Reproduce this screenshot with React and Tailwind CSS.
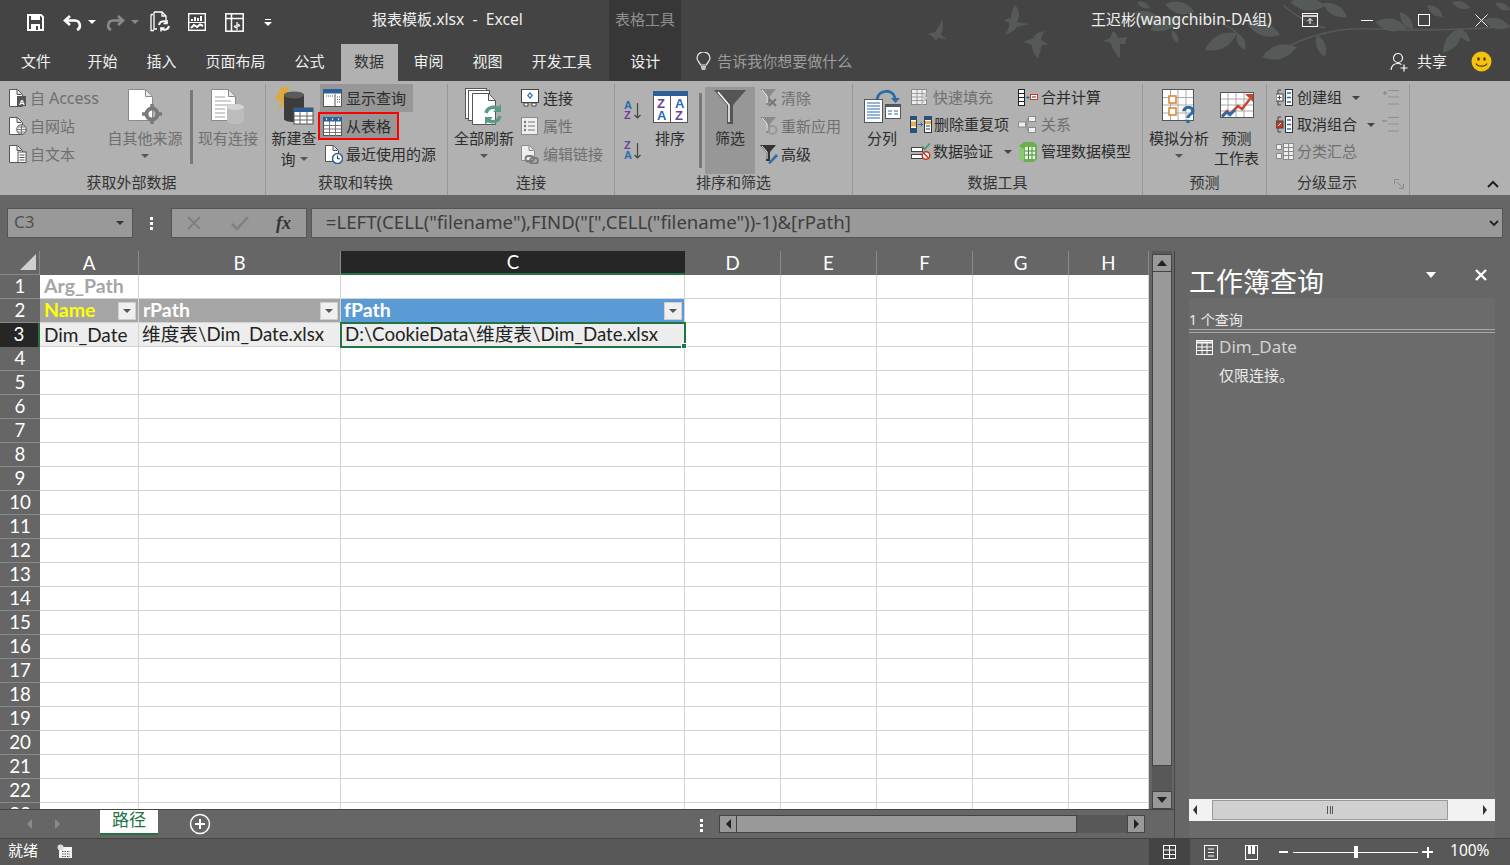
import { Fragment } from "react";

const GREY = "#6f6f6f";

const Caret = ({ color = "#4a4a4a", className = "" }) => (
  <span className={`inline-block w-0 h-0 border-x-[4px] border-x-transparent border-t-[4px] ${className}`} style={{ borderTopColor: color }} />
);

// ---- quick access + window icons
const SaveIcon = () => (
  <svg width="17" height="17" viewBox="0 0 17 17">
    <path d="M1 1h13l2 2v13H1z" fill="none" stroke="#fff" strokeWidth="2" />
    <rect x="4" y="1" width="9" height="5" fill="#fff" />
    <rect x="4" y="10" width="9" height="6" fill="#fff" />
    <rect x="9" y="12" width="2" height="4" fill="#444" />
  </svg>
);
const UndoIcon = ({ color = "#fff" }) => (
  <svg width="19" height="17" viewBox="0 0 19 17" fill="none">
    <path d="M7 2 2 6.500 7 11" stroke={color} strokeWidth="2.600" />
    <path d="M3 6.500h9a5 5 0 0 1 2 9.500" stroke={color} strokeWidth="2.600" />
  </svg>
);
const RedoIcon = ({ color = "#8a8a8a" }) => (
  <svg width="19" height="17" viewBox="0 0 19 17" fill="none">
    <path d="M12 2l5 4.500L12 11" stroke={color} strokeWidth="2.600" />
    <path d="M16 6.500H7a5 5 0 0 0-2 9.500" stroke={color} strokeWidth="2.600" />
  </svg>
);
const RefreshDocIcon = () => (
  <svg width="21" height="22" viewBox="0 0 21 22" fill="none" stroke="#fff" strokeWidth="1.300">
    <path d="M1 3.500h2M1 3.500v16h3" />
    <path d="M4 1h8l4 4v5M4 1v17h3" />
    <path d="M12 1v4h4" />
    <path d="M9 14a4.500 4.500 0 0 1 8-2M19 15a4.500 4.500 0 0 1-8 2" strokeWidth="2" />
    <path d="M17 9v3.500h-3.500M11 20.500V17h3.500" strokeWidth="1.500" />
  </svg>
);
const ChartBoardIcon = () => (
  <svg width="18" height="18" viewBox="0 0 18 18" fill="none">
    <rect x=".7" y=".7" width="16.600" height="16.600" stroke="#fff" strokeWidth="1.400" />
    <path d="M4 8V6M7 8V4M10 8V5M13 8V3" stroke="#fff" strokeWidth="2" />
    <path d="M1 9.500h16" stroke="#fff" />
    <path d="M3 15l3-3 3 2 3-2.500 3 1.500" stroke="#fff" strokeWidth="2" />
  </svg>
);
const PivotIcon = () => (
  <svg width="19" height="19" viewBox="0 0 19 19" fill="none" stroke="#fff">
    <rect x=".8" y=".8" width="17.400" height="17.400" strokeWidth="1.500" />
    <path d="M1 5.500h17M6.500 1v17" strokeWidth="1.500" />
    <path d="M9 13h6M15 13l-2-2M9 13l2 2M12 9v8" strokeWidth="1.200" />
  </svg>
);
const RestoreRibbonIcon = () => (
  <svg width="16" height="14" viewBox="0 0 16 14" fill="none" stroke="#fff">
    <rect x=".5" y=".5" width="15" height="13" />
    <path d="M1 3h14" strokeWidth="1.500" />
    <path d="M8 11V5.500M5.500 8 8 5.500 10.500 8" />
  </svg>
);
const ShareIcon = () => (
  <svg width="19" height="20" viewBox="0 0 19 20" fill="none" stroke="#fff" strokeWidth="1.200">
    <circle cx="8" cy="6" r="4.500" />
    <path d="M1 18c.5-4 3-6.500 7-6.500 1.500 0 2.500.3 3.500 1" />
    <path d="M14 12.500v7M10.500 16h7" />
  </svg>
);
const Smiley = () => (
  <svg width="21" height="21" viewBox="0 0 21 21">
    <circle cx="10.500" cy="10.500" r="10" fill="#f4c20d" />
    <ellipse cx="7.500" cy="8" rx="1.300" ry="1.800" fill="#4a3c00" />
    <ellipse cx="13.500" cy="8" rx="1.300" ry="1.800" fill="#4a3c00" />
    <path d="M5 12.500c1.500 3.500 9.500 3.500 11 0" fill="none" stroke="#4a3c00" strokeWidth="1.100" />
  </svg>
);
const Bulb = () => (
  <svg width="15" height="19" viewBox="0 0 15 19" fill="none" stroke="#ededed" strokeWidth="1.200">
    <path d="M4.500 13c0-2-3.500-3.500-3.500-7a6.500 6 0 0 1 13 0c0 3.500-3.500 5-3.500 7z" />
    <path d="M5 15h5M5.500 17h4" strokeWidth="1.500" />
  </svg>
);

// ---- ribbon icons
const Paper = ({ x = 0, y = 0, w = 13, h = 18, fill = "#fff", stroke = "#555" }) => (
  <g>
    <path d={`M${x + .5} ${y + .5}h${w - 5}l5 5V${y + h - .5}H${x + .5}z`} fill={fill} stroke={stroke} />
    <path d={`M${x + w - 5} ${y + 1}v4.500h4.500`} fill="#ddd" stroke={stroke} />
  </g>
);
const AccessIcon = () => (
  <svg width="18" height="18" viewBox="0 0 18 18">
    <Paper w={13} h={18} />
    <rect x="8" y="7" width="9" height="10" fill="#555" />
    <text x="10" y="15.500" fontSize="8" fontWeight="700" fill="#fff" fontFamily="Liberation Sans">A</text>
  </svg>
);
const WebIcon = () => (
  <svg width="18" height="18" viewBox="0 0 18 18">
    <Paper w={13} h={18} />
    <circle cx="12.500" cy="12.500" r="4.800" fill="#f1f1f1" stroke="#555" />
    <path d="M8 12.500h9M12.500 8v9M9 10h7M9 15h7" stroke="#555" strokeWidth=".7" />
  </svg>
);
const TextFileIcon = () => (
  <svg width="18" height="18" viewBox="0 0 18 18">
    <Paper w={13} h={18} />
    <rect x="9" y="7" width="8" height="10.500" fill="#fff" stroke="#555" />
    <path d="M10.500 10h5M10.500 12.500h5M10.500 15h5" stroke="#555" />
  </svg>
);
const OtherSourceIcon = () => (
  <svg width="34" height="36" viewBox="0 0 34 36">
    <path d="M.5.500h17l7 7v24H.500z" fill="#fff" stroke="#8a8a8a" />
    <path d="M17.500 1v6.500h6.500" fill="#e6e6e6" stroke="#8a8a8a" />
    <circle cx="24" cy="25" r="5.500" fill="none" stroke="#7a7a7a" strokeWidth="4" />
    <path d="M24 15v5M24 30v5M14 25h5M29 25h5" stroke="#7a7a7a" strokeWidth="3.500" />
  </svg>
);
const ExistingIcon = () => (
  <svg width="34" height="36" viewBox="0 0 34 36">
    <path d="M.5.500h17l7 7v24H.500z" fill="#fff" stroke="#8a8a8a" />
    <path d="M17.500 1v6.500h6.500" fill="#e6e6e6" stroke="#8a8a8a" />
    <path d="M4 8h10M4 12h16M4 16h16M4 20h10M4 24h10M4 28h10" stroke="#a0a0a0" />
    <path d="M16 18c0-4 17-4 17 0v14c0 4-17 4-17 0z" fill="#bdbdbd" />
    <ellipse cx="24.500" cy="18" rx="8.500" ry="3" fill="#d5d5d5" />
  </svg>
);
const NewQueryIcon = () => (
  <svg width="42" height="40" viewBox="0 0 42 40">
    <path d="M8 0h9l-6 10h5L5 24l3-11H2z" fill="#e0a73c" />
    <path d="M11 8c0-4 20-4 20 0v24c0 4-20 4-20 0z" fill="#3c3c3c" />
    <ellipse cx="21" cy="8" rx="10" ry="3.500" fill="#5a5a5a" />
    <rect x="21" y="21" width="19" height="16" fill="#fff" stroke="#555" />
    <rect x="21" y="21" width="19" height="4" fill="#2b5f96" />
    <path d="M21 29h19M21 33h19M27 25v12M34 25v12" stroke="#666" />
  </svg>
);
const ShowQueryIcon = () => (
  <svg width="19" height="18" viewBox="0 0 19 18">
    <rect x=".5" y=".5" width="18" height="17" fill="#fff" stroke="#555" />
    <rect x="0" y="0" width="19" height="4.500" fill="#2b5f96" />
    <path d="M12 5v12" stroke="#555" />
    <path d="M14 8h3M14 10.500h3M14 13h3M3 7h7" stroke="#555" strokeDasharray="1 1" />
  </svg>
);
const FromTableIcon = () => (
  <svg width="19" height="19" viewBox="0 0 19 19">
    <rect x=".5" y=".5" width="18" height="18" fill="#fff" stroke="#555" />
    <rect x="0" y="0" width="19" height="4.500" fill="#2b5f96" />
    <path d="M1 8.500h17M1 12h17M1 15.500h17M6.500 4v15M12.500 4v15" stroke="#777" />
    <path d="M2.500 1.500h2l-1 2zM8.500 1.500h2l-1 2zM14.500 1.500h2l-1 2z" fill="#fff" />
  </svg>
);
const RecentIcon = () => (
  <svg width="18" height="19" viewBox="0 0 18 19">
    <Paper w={13} h={17} />
    <circle cx="12.500" cy="13.500" r="5" fill="#fff" stroke="#2b5f96" strokeWidth="1.500" />
    <path d="M12.500 10.500v3.300h2.500" stroke="#333" fill="none" />
  </svg>
);
const RefreshAllIcon = () => (
  <svg width="38" height="38" viewBox="0 0 38 38">
    <rect x=".5" y=".5" width="21" height="30" fill="#fff" stroke="#555" />
    <rect x="3.500" y="2.500" width="21" height="30" fill="#fff" stroke="#555" />
    <path d="M7.500 5.500h16l7 7v24h-23z" fill="#fff" stroke="#555" />
    <path d="M23.500 6v6.500H30" fill="#eee" stroke="#555" />
    <path d="M21 25a7.500 7.500 0 0 1 13-3M35 28a7.500 7.500 0 0 1-13 3" fill="none" stroke="#5b9a85" strokeWidth="3.500" />
    <path d="M36 16v8h-8zM20 37v-8h8z" fill="#5b9a85" />
  </svg>
);
const ConnectIcon = () => (
  <svg width="18" height="18" viewBox="0 0 18 18">
    <rect x=".5" y=".5" width="17" height="13" fill="#fff" stroke="#444" />
    <path d="M3 17h4v-3H3zM11 17h4v-3h-4z" fill="#fff" stroke="#444" />
    <path d="M9 3l3 3.500L9 10 6 6.500z" fill="#2b6cb0" />
    <circle cx="9" cy="6.500" r="1.200" fill="#fff" />
  </svg>
);
const PropsIcon = () => (
  <svg width="17" height="18" viewBox="0 0 17 18">
    <rect x=".5" y=".5" width="16" height="17" fill="#efefef" stroke="#8a8a8a" />
    <path d="M7 5h7M7 9h7M7 13h7" stroke="#777" />
    <circle cx="4" cy="5" r="1.200" fill="#777" />
    <circle cx="4" cy="9" r="1.200" fill="#777" />
    <circle cx="4" cy="13" r="1.200" fill="#777" />
  </svg>
);
const EditLinksIcon = () => (
  <svg width="18" height="19" viewBox="0 0 18 19">
    <Paper w={13} h={16} fill="#eee" stroke="#8a8a8a" />
    <rect x="4.500" y="11" width="8" height="5.500" rx="2.700" fill="none" stroke="#7a7a7a" strokeWidth="1.800" />
    <rect x="9" y="13" width="8" height="5.500" rx="2.700" fill="none" stroke="#7a7a7a" strokeWidth="1.800" />
  </svg>
);
const SortAsc = ({ flip = false }) => {
  const top = flip ? "Z" : "A";
  const bottom = flip ? "A" : "Z";
  return (
    <svg width="19" height="20" viewBox="0 0 19 20" fontFamily="Liberation Sans" fontWeight="700" fontSize="11">
      <text x="0" y="9" fill={flip ? "#6b3fa0" : "#2b6cb0"}>{top}</text>
      <text x="0" y="19" fill={flip ? "#2b6cb0" : "#6b3fa0"}>{bottom}</text>
      <path d="M13.500 3v15M10.500 15l3 3 3-3" fill="none" stroke="#444" strokeWidth="1.200" />
    </svg>
  );
};
const SortBigIcon = () => (
  <svg width="35" height="32" viewBox="0 0 35 32" fontFamily="Liberation Sans" fontWeight="700" fontSize="13">
    <rect x=".5" y=".5" width="34" height="31" fill="#fff" stroke="#555" />
    <rect x="0" y="0" width="35" height="5" fill="#2b5f96" />
    <path d="M17.500 5v27" stroke="#555" />
    <text x="4" y="17" fill="#6b3fa0">Z</text>
    <text x="4" y="29" fill="#2b6cb0">A</text>
    <text x="22" y="17" fill="#2b6cb0">A</text>
    <text x="22" y="29" fill="#6b3fa0">Z</text>
  </svg>
);
const FunnelBig = () => (
  <svg width="32" height="34" viewBox="0 0 32 34">
    <path d="M0 0h32L19 15v19h-6V15z" fill="#555" />
    <path d="M4 2l11 13v17" fill="none" stroke="#fff" strokeWidth="1.500" />
  </svg>
);
const FunnelSmall = ({ dim, children, color = "#555" }) => (
  <svg width="20" height="20" viewBox="0 0 20 20">
    <path d="M1 1h16l-6 7v9H7V8z" fill={dim ? "#8a8a8a" : color} />
    <path d="M3 2l5 6v7" fill="none" stroke="#fff" />
    {children}
  </svg>
);
const SplitIcon = () => (
  <svg width="37" height="35" viewBox="0 0 37 35">
    <path d="M13 10C15 0 29 0 31 9" fill="none" stroke="#2b6ba8" strokeWidth="3" />
    <path d="M27 9h9l-4.500 5z" fill="#2b6ba8" />
    <rect x=".5" y="10.500" width="18" height="23" fill="#fff" stroke="#555" />
    <path d="M3 14h13M3 17h13M3 20h13M3 23h13M3 26h13M3 29h13" stroke="#2b6ba8" />
    <rect x="21.500" y="15.500" width="15" height="14" fill="#fff" stroke="#555" />
    <rect x="21" y="15" width="16" height="3" fill="#555" />
    <path d="M24 22h4M30 22h4M24 25h4M30 25h4" stroke="#2b6ba8" />
  </svg>
);
const FlashFillIcon = () => (
  <svg width="18" height="18" viewBox="0 0 18 18">
    <rect x=".5" y=".5" width="15" height="15" fill="#efefef" stroke="#8a8a8a" />
    <path d="M1 4.500h14M1 8h14M1 11.500h14M6 1v14M11 1v14" stroke="#9c9c9c" />
    <path d="M14 4l-4 6h3l-3 7 7-9h-3l2-4z" fill="#c9c9c9" />
  </svg>
);
const DedupeIcon = () => (
  <svg width="22" height="17" viewBox="0 0 22 17">
    <rect x=".5" y=".5" width="6" height="16" fill="#fff" stroke="#333" />
    <rect x="0" y="0" width="7" height="4" fill="#2b4f7c" />
    <rect x="1" y="5.500" width="5" height="5" fill="#e0b050" />
    <rect x="0" y="12" width="7" height="5" fill="#2b4f7c" />
    <rect x="14.500" y=".5" width="7" height="16" fill="#fff" stroke="#333" />
    <rect x="14" y="0" width="8" height="4" fill="#2b4f7c" />
    <rect x="15" y="5" width="6" height="3" fill="#e0b050" />
    <path d="M16 10h4M16 13h4" stroke="#333" />
    <path d="M8 8.500h4.500M10.500 6.500l2 2-2 2" fill="none" stroke="#2b6ba8" />
  </svg>
);
const ValidateIcon = () => (
  <svg width="20" height="17" viewBox="0 0 20 17">
    <rect x=".5" y="4.500" width="11" height="4" fill="#fff" stroke="#444" />
    <rect x=".5" y="11.500" width="11" height="4" fill="#fff" stroke="#444" />
    <path d="M11 3.500l2.500 2.500L19 .5" fill="none" stroke="#3f8f74" strokeWidth="1.500" />
    <circle cx="15" cy="12.500" r="3.800" fill="#fff" stroke="#c23b22" strokeWidth="1.500" />
    <path d="M12.500 10l5 5" stroke="#c23b22" strokeWidth="1.500" />
  </svg>
);
const ConsolidateIcon = () => (
  <svg width="20" height="17" viewBox="0 0 20 17">
    <rect x=".5" y=".5" width="6" height="16" fill="#fff" stroke="#222" />
    <path d="M1 4.500h5M1 8.500h5M1 12.500h5" stroke="#222" />
    <path d="M8 8.500h3M9.500 7l1.500 1.500-1.500 1.500" fill="none" stroke="#2b6ba8" />
    <rect x="12.500" y="5.500" width="7" height="5" fill="#fff" stroke="#c23b22" />
    <path d="M14 8h4" stroke="#333" />
  </svg>
);
const RelationIcon = () => (
  <svg width="18" height="17" viewBox="0 0 18 17">
    <rect x="10.500" y=".5" width="7" height="5" fill="#efefef" stroke="#8a8a8a" />
    <rect x=".5" y="6" width="7" height="5" fill="#efefef" stroke="#8a8a8a" />
    <rect x="10.500" y="11.500" width="7" height="5" fill="#efefef" stroke="#8a8a8a" />
    <path d="M7.500 8.500h1.500V3h1.500M9 8.500V14h1.500" fill="none" stroke="#8a8a8a" />
  </svg>
);
const DataModelIcon = () => (
  <svg width="20" height="20" viewBox="0 0 20 20">
    <path d="M6 0h10l3 3v14l-3 3H6l-5-4V4z" fill="#6ab04c" />
    <path d="M1 4l5 3v13l-5-4z" fill="#8bc86f" />
    <rect x="7" y="5" width="10" height="12" fill="#eef7e8" />
    <path d="M7 9h10M7 13h10M10.500 5v12M14 5v12" stroke="#3f8a34" />
  </svg>
);
const WhatIfIcon = () => (
  <svg width="35" height="36" viewBox="0 0 35 36">
    <rect x=".5" y=".5" width="31" height="31" fill="#fff" stroke="#555" />
    <path d="M1 8.500h30M1 16h30M1 24h30M8.500 1v30M16 1v30M24 1v30" stroke="#aaa" />
    <rect x="7" y="7" width="7" height="7" fill="#fff" stroke="#d9822b" strokeWidth="1.500" />
    <rect x="7" y="19" width="7" height="7" fill="#fff" stroke="#d9822b" strokeWidth="1.500" />
    <text x="19" y="34" fontSize="24" fontWeight="700" fill="#2b6ba8" fontFamily="Liberation Sans">?</text>
  </svg>
);
const ForecastIcon = () => (
  <svg width="34" height="30" viewBox="0 0 34 30">
    <rect x=".5" y=".5" width="33" height="25" fill="#fff" stroke="#555" />
    <path d="M1 7h32M1 13h32M1 19h32M8 1v24M16 1v24M24 1v24" stroke="#aaa" />
    <path d="M2 24l5-5 3 3 8-8 4 3 8-10" fill="none" stroke="#c2492f" strokeWidth="2.500" />
    <path d="M25 2h8v8z" fill="#c2492f" />
    <path d="M2 25l5-5 3 3 5-5" fill="none" stroke="#2b6ba8" strokeWidth="2.500" />
  </svg>
);
const GroupIcon = ({ ungroup }) => (
  <svg width="17" height="17" viewBox="0 0 17 17">
    <path d="M5 1H2v15h3" fill="none" stroke="#444" />
    <rect x="0" y="5" width="7" height="7" fill={ungroup ? "#c23b22" : "#fff"} stroke="#444" />
    <path d={ungroup ? "M2 10l3-3" : "M3.500 6.500v4M1.500 8.500h4"} stroke={ungroup ? "#fff" : "#444"} />
    <rect x="9.500" y=".5" width="7" height="16" fill="#fff" stroke="#333" />
    <path d="M11 4h4M11 8.500h4M11 13h4" stroke="#2b6ba8" strokeWidth="1.500" />
  </svg>
);
const SubtotalIcon = () => (
  <svg width="18" height="17" viewBox="0 0 18 17">
    <rect x=".5" y="1.500" width="5" height="5" fill="#eee" stroke="#888" />
    <rect x=".5" y="10.500" width="5" height="5" fill="#eee" stroke="#888" />
    <rect x="7.500" y=".5" width="10" height="16" fill="#eee" stroke="#888" />
    <path d="M8 4.500h9M8 8.500h9M8 12.500h9M12.500 1v15" stroke="#888" />
  </svg>
);
const IndentIcon = ({ plus }) => (
  <svg width="18" height="17" viewBox="0 0 18 17" stroke="#8f8f8f">
    <path d="M7 1.500h11M7 8h11M7 15h11" />
    <path d={plus ? "M2 4h4M4 2v4" : "M1 5h5"} strokeWidth="1.500" />
  </svg>
);

// ---- ribbon parts
const Group = ({ label, className, labelClass = "", children, extra }) => (
  <div className={`flex flex-col shrink-0 border-r border-[#979797] ${className}`}>
    <div className="flex h-[88px]">{children}</div>
    <div className={`h-[18px] leading-[20px] text-center text-[15px] text-[#333] relative ${labelClass}`}>
      {label}
      {extra}
    </div>
  </div>
);

const Small = ({ icon, text, dim, caret, className = "" }) => (
  <div className={`flex items-center whitespace-nowrap text-[15px] ${className}`} style={{ color: dim ? GREY : "#2c2c2c" }}>
    {icon}
    <span>{text}</span>
    {caret}
  </div>
);

const Large = ({ icon, lines, dim, caret, className = "" }) => (
  <div className={`flex flex-col items-center text-[15px] leading-[18px] shrink-0 ${className}`} style={{ color: dim ? GREY : "#2c2c2c" }}>
    <div className="h-[45px] flex items-center justify-center">{icon}</div>
    {lines.map((l) => (
      <div key={l} className="h-[20px] whitespace-nowrap">{l}</div>
    ))}
    {caret && <Caret color="#555" className="mt-[5px]" />}
  </div>
);

const Ribbon = () => (
  <div className="flex h-[114px] pt-[3px] bg-[#b1b1b1] shrink-0">
    <Group label="获取外部数据" className="w-[266px]" labelClass="pr-[2px]">
      <div className="flex flex-col w-[105px] pl-[9px]">
        <Small dim icon={<AccessIcon />} text={<>自 <span className="text-[16px]">Access</span></>} className="h-[28px] gap-[3px]" />
        <Small dim icon={<WebIcon />} text="自网站" className="h-[28px] gap-[3px]" />
        <Small dim icon={<TextFileIcon />} text="自文本" className="h-[28px] gap-[3px]" />
      </div>
      <Large dim icon={<OtherSourceIcon />} lines={["自其他来源"]} caret className="w-[80px]" />
      <div className="w-[3px] h-[74px] mt-[6px] ml-[5px] bg-[#787878]" />
      <Large dim icon={<ExistingIcon />} lines={["现有连接"]} className="w-[70px]" />
    </Group>

    <Group label="获取和转换" className="w-[182px]" labelClass="pr-[2px]">
      <div className="ml-[1px] w-[54px] flex flex-col items-center text-[15px] text-[#2c2c2c] shrink-0">
        <div className="h-[45px] flex items-center"><NewQueryIcon /></div>
        <div className="h-[20px] leading-[18px] whitespace-nowrap">新建查</div>
        <div className="h-[20px] leading-[18px] flex items-center gap-[4px]">询<Caret color="#555" /></div>
      </div>
      <div className="flex flex-col -ml-[1px]">
        <Small icon={<ShowQueryIcon />} text="显示查询" className="h-[28px] w-[93px] pl-[3px] gap-[4px] bg-[#979797]" />
        <Small icon={<FromTableIcon />} text="从表格" className="h-[28px] w-[81px] -ml-[2px] pl-[3px] gap-[4px] bg-[#979797] border-2 border-[#ff0000]" />
        <Small icon={<RecentIcon />} text="最近使用的源" className="h-[28px] pl-[5px] gap-[3px]" />
      </div>
    </Group>

    <Group label="连接" className="w-[167px]">
      <Large icon={<RefreshAllIcon />} lines={["全部刷新"]} caret className="w-[72px]" />
      <div className="flex flex-col pl-[1px]">
        <Small icon={<ConnectIcon />} text="连接" className="h-[28px] gap-[4px]" />
        <Small dim icon={<PropsIcon />} text="属性" className="h-[28px] gap-[5px]" />
        <Small dim icon={<EditLinksIcon />} text="编辑链接" className="h-[28px] gap-[4px]" />
      </div>
    </Group>

    <Group label="排序和筛选" className="w-[238px]">
      <div className="w-[37px] pl-[9px] pt-[16px] flex flex-col gap-[20px] shrink-0">
        <SortAsc />
        <SortAsc flip />
      </div>
      <Large icon={<SortBigIcon />} lines={["排序"]} className="w-[36px]" />
      <div className="w-[3px] h-[75px] mt-[9px] ml-[11px] bg-[#787878]" />
      <div className="mt-[3px] ml-[3px] w-[50px] h-[87px] bg-[#979797] shrink-0">
        <Large icon={<FunnelBig />} lines={["筛选"]} className="w-[50px] -mt-[3px]" />
      </div>
      <div className="flex flex-col pl-[4px]">
        <Small dim icon={<FunnelSmall dim><path d="M10 11l7 7M17 11l-7 7" stroke="#777" strokeWidth="2" /></FunnelSmall>} text="清除" className="h-[28px] gap-[2px]" />
        <Small dim icon={<FunnelSmall dim><circle cx="13.500" cy="14" r="4" fill="none" stroke="#999" strokeWidth="2" /></FunnelSmall>} text="重新应用" className="h-[28px] gap-[2px]" />
        <Small icon={<FunnelSmall color="#333"><path d="M9 19l8-9 2 2-8 8z" fill="#2b6ba8" /></FunnelSmall>} text="高级" className="h-[28px] gap-[2px]" />
      </div>
    </Group>

    <Group label="数据工具" className="w-[290px]">
      <Large icon={<SplitIcon />} lines={["分列"]} className="w-[58px]" />
      <div className="flex flex-col w-[107px]">
        <Small dim icon={<FlashFillIcon />} text="快速填充" className="h-[27px] gap-[4px]" />
        <Small icon={<DedupeIcon />} text="删除重复项" className="h-[27px] -ml-[1px] gap-[2px]" />
        <Small icon={<ValidateIcon />} text="数据验证" caret={<Caret color="#444" className="ml-[9px]" />} className="h-[27px] gap-[2px]" />
      </div>
      <div className="flex flex-col">
        <Small icon={<ConsolidateIcon />} text="合并计算" className="h-[27px] gap-[3px]" />
        <Small dim icon={<RelationIcon />} text="关系" className="h-[27px] gap-[5px]" />
        <Small icon={<DataModelIcon />} text="管理数据模型" className="h-[27px] gap-[3px]" />
      </div>
    </Group>

    <Group label="预测" className="w-[124px]">
      <Large icon={<WhatIfIcon />} lines={["模拟分析"]} caret className="w-[72px]" />
      <Large icon={<ForecastIcon />} lines={["预测", "工作表"]} className="w-[45px] -ml-[1px]" />
    </Group>

    <Group
      label="分级显示"
      className="w-[143px]"
      labelClass="pr-[22px]"
      extra={
        <svg className="absolute right-[4px] top-[7px]" width="11" height="11" viewBox="0 0 11 11" fill="none" stroke="#8a8a8a">
          <path d="M.5 5V.5H5M3 3l6 6M9.500 5v4.500H5" />
        </svg>
      }
    >
      <div className="flex flex-col w-[114px] pl-[9px]">
        <Small icon={<GroupIcon />} text="创建组" caret={<Caret color="#444" className="ml-[6px]" />} className="h-[27px] gap-[4px]" />
        <Small icon={<GroupIcon ungroup />} text="取消组合" caret={<Caret color="#444" className="ml-[6px]" />} className="h-[27px] gap-[4px]" />
        <Small dim icon={<SubtotalIcon />} text="分类汇总" className="h-[27px] gap-[3px]" />
      </div>
      <div className="flex flex-col">
        <div className="h-[27px] flex items-center"><IndentIcon plus /></div>
        <div className="h-[27px] flex items-center"><IndentIcon /></div>
      </div>
    </Group>

    <div className="flex-1 flex items-end justify-end pr-[11px] pb-[7px]">
      <svg width="12" height="8" viewBox="0 0 12 8" fill="none" stroke="#222" strokeWidth="2">
        <path d="M1 7l5-5 5 5" />
      </svg>
    </div>
  </div>
);

// ---- title bar decoration (birds and a leafy branch)
const DECOR = "#555958";
const birds = [
  "M942 19C944 27 942 32 941 35L947 39 938 38 936 41 932 36 927 34 935 32C938 28 940 24 942 19Z",
  "M1015 5C1020 10 1020 18 1017 22L1029 24 1017 27C1014 31 1010 33 1005 35 1008 30 1010 26 1009 23L1004 20 1011 18C1011 13 1012 9 1015 5Z",
  "M1045 31C1040 32 1035 33 1034 38L1023 42 1032 45C1032 50 1034 55 1038 58 1040 53 1041 49 1041 46L1048 44 1041 40C1041 37 1043 34 1045 31Z",
  "M1113 31C1116 33 1117 35 1118 38L1127 37 1125 44 1120 44C1120 49 1120 54 1120 58 1115 54 1112 48 1111 43L1103 41 1110 38C1111 36 1112 33 1113 31Z",
];
const leaves = [
  [1137, 2, 1150, 8], [1135, 12, 1165, 25], [1150, 30, 1180, 18], [1172, 30, 1178, 43], [1165, 4, 1195, 12],
  [1205, 50, 1237, 33], [1237, 33, 1245, 50], [1247, 23, 1280, 35], [1262, 57, 1297, 47], [1317, 35, 1325, 57],
  [1290, 2, 1325, 6], [1323, 3, 1347, 17], [1375, 22, 1407, 28], [1400, 12, 1413, 30], [1443, 53, 1462, 28],
  [1427, 5, 1443, 17], [1457, 28, 1470, 42], [1483, 20, 1510, 27], [1452, 2, 1470, 8], [1495, 3, 1510, 10],
];
const leafPath = ([x1, y1, x2, y2]) => {
  const mx = (x1 + x2) / 2;
  const my = (y1 + y2) / 2;
  const nx = (y2 - y1) * 0.38;
  const ny = (x1 - x2) * 0.38;
  return `M${x1} ${y1}Q${mx + nx} ${my + ny} ${x2} ${y2}Q${mx - nx} ${my - ny} ${x1} ${y1}Z`;
};
const Decoration = () => (
  <svg className="absolute inset-0 pointer-events-none" width="1510" height="81" viewBox="0 0 1510 81">
    {birds.map((d) => (
      <path key={d} d={d} fill={DECOR} />
    ))}
    <path d="M1287 47C1305 38 1320 33 1340 30C1365 27 1385 30 1407 30C1440 30 1470 30 1510 26M1283 5C1295 15 1305 22 1325 28M1180 20C1200 18 1220 18 1237 33" stroke={DECOR} strokeWidth="1.500" fill="none" />
    {leaves.map((l) => (
      <path key={l.join()} d={leafPath(l)} fill={DECOR} />
    ))}
  </svg>
);

const tabs = ["文件", "开始", "插入", "页面布局", "公式", "数据", "审阅", "视图", "开发工具"];

const TitleArea = () => (
  <div className="relative h-[81px] bg-[#444444] shrink-0 text-white">
    <Decoration />
    <div className="relative flex h-[44px]">
      <div className="flex items-center pl-[27px] w-[372px] shrink-0">
        <SaveIcon />
        <span className="ml-[19px]"><UndoIcon /></span>
        <Caret color="#fff" className="ml-[6px] border-x-[3px]" />
        <span className="ml-[10px]"><RedoIcon /></span>
        <Caret color="#8a8a8a" className="ml-[6px] border-x-[3px]" />
        <span className="ml-[11px]"><RefreshDocIcon /></span>
        <span className="ml-[17px]"><ChartBoardIcon /></span>
        <span className="ml-[19px]"><PivotIcon /></span>
        <div className="ml-[20px] flex flex-col items-center gap-[2px]">
          <span className="w-[6px] h-[1px] bg-white" />
          <Caret color="#fff" className="border-x-[3px]" />
        </div>
      </div>
      <div className="text-[15px] leading-[38px] w-[237px] shrink-0 whitespace-pre text-[#eeeeee]">报表模板<span className="text-[15.700px]">.xlsx  -  Excel</span></div>
      <div className="w-[72px] bg-[#373737] text-[15px] text-center leading-[38px] text-[#8f8f8f] shrink-0">表格工具</div>
      <div className="ml-auto flex items-center">
        <span className="text-[15px] mb-[5px] w-[211px] whitespace-nowrap text-[#eeeeee]">王迟彬<span className="text-[15.700px]">(wangchibin-DA</span>组<span className="text-[15.700px]">)</span></span>
        <span className="w-[16px] mb-[4px] flex items-center"><RestoreRibbonIcon /></span>
        <div className="w-[12px] mb-[4px] h-[1px] bg-white ml-[43px]" />
        <div className="w-[12px] h-[12px] mb-[4px] border border-white ml-[45px]" />
        <svg className="ml-[45px] mr-[22px] mb-[4px]" width="13" height="13" viewBox="0 0 13 13" stroke="#fff"><path d="M.5.500l12 12M12.500.500l-12 12" /></svg>
      </div>
    </div>
    <div className="relative flex h-[37px] text-[15px] text-[#f0f0f0]">
      {tabs.map((t) => (
        <div
          key={t}
          className={t === "数据" ? "ml-[2px] mr-[1px] pl-[13px] pr-[14px] leading-[34px] bg-[#b1b1b1] text-[#333]" : t === "文件" ? "pl-[21px] pr-[22px] leading-[34px]" : "px-[14.500px] leading-[34px]"}
        >
          {t}
        </div>
      ))}
      <div className="ml-[3px] w-[72px] bg-[#373737] text-center leading-[34px]">设计</div>
      <div className="flex items-center ml-[15px] mb-[2px] gap-[6px] text-[#9d9d9d]">
        <Bulb />
        <span>告诉我你想要做什么</span>
      </div>
      <div className="ml-auto flex items-center mb-[2px]">
        <ShareIcon />
        <span className="ml-[8px]">共享</span>
        <span className="ml-[24px] mr-[18px]"><Smiley /></span>
      </div>
    </div>
  </div>
);

const FormulaBar = () => (
  <div className="flex h-[56px] pt-[13px] px-[7px] bg-[#666666] shrink-0">
    <div className="w-[126px] h-[30px] flex items-center justify-between pl-[6px] pr-[8px] bg-[#999999] border border-[#555] text-[17px] text-[#505050]">
      <span className="mb-[2px]">C3</span>
      <Caret color="#333" className="border-x-[3px] border-t-[3px]" />
    </div>
    <div className="w-[38px] h-[30px] flex flex-col items-center justify-center gap-[2px]">
      <span className="w-[3px] h-[3px] bg-white" />
      <span className="w-[3px] h-[3px] bg-white" />
      <span className="w-[3px] h-[3px] bg-white" />
    </div>
    <div className="w-[136px] h-[30px] flex items-center bg-[#999999] border border-[#555] pl-[14px]">
      <svg width="16" height="16" viewBox="0 0 16 16" stroke="#808080" strokeWidth="2"><path d="M2 2l12 12M14 2 2 14" /></svg>
      <svg className="ml-[29px]" width="18" height="16" viewBox="0 0 18 16" fill="none" stroke="#808080" strokeWidth="2.500"><path d="M1 9l5 5L17 2" /></svg>
      <span className="ml-[27px] text-[18px] italic font-bold text-[#333] font-['Liberation_Serif',serif]">fx</span>
    </div>
    <div className="ml-[4px] w-[1193px] h-[30px] flex items-center justify-between pl-[14px] pr-[3px] bg-[#999999] border border-[#555] text-[#3e3e3e] text-[18.600px] whitespace-nowrap">
      <span className="mb-[3px]">{'=LEFT(CELL("filename"),FIND("[",CELL("filename"))-1)&[rPath]'}</span>
      <svg width="10" height="7" viewBox="0 0 10 7" fill="none" stroke="#222" strokeWidth="1.800"><path d="M1 1l4 4 4-4" /></svg>
    </div>
  </div>
);

const FilterBtn = () => (
  <span className="w-[18px] h-[18px] flex items-center justify-center bg-[#f0f0f0] border border-[#cfcfcf] shrink-0">
    <Caret color="#555" className="border-x-[3px]" />
  </span>
);

const columns = ["A", "B", "C", "D", "E", "F", "G", "H"];
const rowNums = Array.from({ length: 23 }, (_, i) => i + 1);

const cellClass = "border-r border-b border-[#d4d4d4] flex items-center whitespace-nowrap overflow-hidden";

const CellContent = ({ row, col }) => {
  if (row === 1 && col === "A") return <div className={`${cellClass} pl-[4px] pb-[1px] text-[19.500px] font-bold text-[#a6a6a6] bg-white overflow-visible`}>Arg_Path</div>;
  if (row === 2 && col === "A") return <div className={`${cellClass} justify-between pl-[4px] pr-[2px] text-[19.500px] font-bold text-[#ffff00] bg-[#a5a5a5]`}><span className="mb-[1px]">Name</span><FilterBtn /></div>;
  if (row === 2 && col === "B") return <div className={`${cellClass} justify-between pl-[4px] pr-[2px] text-[19.500px] font-bold text-white bg-[#a5a5a5]`}><span className="mb-[1px]">rPath</span><FilterBtn /></div>;
  if (row === 2 && col === "C") return <div className={`${cellClass} justify-between pl-[3px] pr-[2px] text-[19.500px] font-bold text-white bg-[#5b9bd5]`}><span className="mb-[1px]">fPath</span><FilterBtn /></div>;
  if (row === 3 && col === "A") return <div className={`${cellClass} pl-[4px] pb-[1px] text-[19px] text-[#222] bg-[#ededed]`}>Dim_Date</div>;
  if (row === 3 && col === "B") return <div className={`${cellClass} pl-[3px] pb-[1px] text-[#222] bg-[#ededed]`}>维度表\Dim_Date.xlsx</div>;
  if (row === 3 && col === "C")
    return (
      <div className="relative flex items-center whitespace-nowrap pl-[4px] pb-[1px] text-[#222] bg-[#ededed]">
        D:\CookieData\维度表\Dim_Date.xlsx
        <div className="absolute -inset-x-px -top-px -bottom-px border-2 border-[#217346]" />
        <span className="absolute -right-[2px] -bottom-[2px] w-[6px] h-[6px] bg-[#217346] border border-white" />
      </div>
    );
  return <div className={`${cellClass} bg-white`} />;
};

const SheetGrid = () => (
  <div className="w-[1149px] h-[558px] overflow-hidden shrink-0 grid grid-cols-[40px_99px_202px_344px_96px_96px_96px_96px_80px] auto-rows-[24px] text-[18.700px] leading-none font-['Lato','Noto_Sans_CJK_SC',sans-serif]">
    <div className="flex items-end justify-end pr-[3px] pb-[4px] border-r border-b border-[#888]">
      <span className="w-0 h-0 border-l-[16px] border-l-transparent border-b-[16px] border-b-[#cfcfcf]" />
    </div>
    {columns.map((c) => (
      <div
        key={c}
        className={c === "C" ? "flex items-center justify-center bg-[#262626] text-white border-b-2 border-[#217346]" : "flex items-center justify-center text-white border-r border-[#8a8a8a]"}
      >
        {c}
      </div>
    ))}
    {rowNums.map((r) => (
      <Fragment key={r}>
        <div className={r === 3 ? "flex items-center justify-center pb-[1px] bg-[#262626] text-white border-r-2 border-[#217346]" : "flex items-center justify-center text-white border-b border-[#8a8a8a]"}>
          {r}
        </div>
        {columns.map((c) => (
          <CellContent key={c} row={r} col={c} />
        ))}
      </Fragment>
    ))}
  </div>
);

const VScrollBar = () => (
  <div className="ml-[3px] w-[20px] h-[558px] flex flex-col pt-[3px] bg-[#585858]">
    <div className="h-[18px] flex items-center justify-center bg-[#999] border border-[#444]">
      <span className="w-0 h-0 border-x-[5px] border-x-transparent border-b-[6px] border-b-[#222]" />
    </div>
    <div className="h-[494px] bg-[#999] border-x border-b border-[#444]" />
    <div className="flex-1" />
    <div className="h-[18px] flex items-center justify-center bg-[#999] border border-[#444]">
      <Caret color="#222" className="border-x-[5px] border-t-[6px]" />
    </div>
  </div>
);

const ScrollArrow = ({ left }) => (
  <span className="w-[18px] h-[18px] flex items-center justify-center bg-[#999] border border-[#444] shrink-0">
    <span className={left ? "w-0 h-0 border-y-[5px] border-y-transparent border-r-[5px] border-r-[#222]" : "w-0 h-0 border-y-[5px] border-y-transparent border-l-[5px] border-l-[#222]"} />
  </span>
);

const SheetTabs = () => (
  <div className="flex h-[29px] w-[1174px] items-start bg-[#666666]">
    <div className="w-[100px] h-[28px] flex items-center pl-[27px] gap-[23px] shrink-0">
      <span className="w-0 h-0 border-y-[5px] border-y-transparent border-r-[5px] border-r-[#8a8a8a]" />
      <span className="w-0 h-0 border-y-[5px] border-y-transparent border-l-[5px] border-l-[#8a8a8a]" />
    </div>
    <div className="w-[58px] h-[25px] bg-white border-b-2 border-[#217346] text-[#217346] text-[17px] leading-[19px] text-center shrink-0">路径</div>
    <svg className="ml-[31px] mt-[3px] shrink-0" width="22" height="22" viewBox="0 0 22 22" fill="none" stroke="#fff">
      <circle cx="11" cy="11" r="9.500" strokeWidth="1.500" />
      <path d="M6 11h10M11 6v10" strokeWidth="2" />
    </svg>
    <div className="ml-[481px] mt-[9px] w-[19px] flex flex-col items-center gap-[2px] shrink-0">
      <span className="w-[3px] h-[3px] bg-white" />
      <span className="w-[3px] h-[3px] bg-white" />
      <span className="w-[3px] h-[3px] bg-white" />
    </div>
    <div className="ml-[8px] mt-[5px] flex w-[426px] bg-[#585858] shrink-0">
      <ScrollArrow left />
      <div className="w-[340px] bg-[#999] border-y border-r border-[#444]" />
      <div className="flex-1" />
      <ScrollArrow />
    </div>
  </div>
);

const QueryPanel = () => (
  <div className="w-[336px] flex flex-col border-l border-[#444] pl-[14px] pr-[15px] bg-[#666666] text-white">
    <div className="h-[47px] flex items-center shrink-0">
      <span className="text-[27px] leading-none mt-[13px]">工作簿查询</span>
      <Caret color="#fff" className="ml-[102px] border-x-[5px] border-t-[6px]" />
      <svg className="ml-[39px]" width="12" height="12" viewBox="0 0 12 12" stroke="#fff" strokeWidth="2.400"><path d="M1 1l10 10M11 1 1 11" /></svg>
    </div>
    <div className="flex-1 flex flex-col bg-[#6b6b6b]">
      <div className="h-[35px] pt-[13px] text-[14px] leading-[17px] text-[#ececec] border-b-[4px] border-double border-[#a8a8a8] shrink-0">1 个查询</div>
      <div className="flex items-center pl-[7px] gap-[6px] text-[#d3d3d3] text-[17px] h-[28px]">
        <svg width="17" height="15" viewBox="0 0 17 15" fill="none" stroke="#fff">
          <rect x=".5" y=".5" width="16" height="14" />
          <path d="M.5 2.500h16" strokeWidth="2" />
          <path d="M1 7h15M1 10.500h15M6 3v11M11 3v11" />
        </svg>
        Dim_Date
      </div>
      <div className="pl-[30px] text-[15px] leading-[28px] text-[#ececec]">仅限连接。</div>
      <div className="mt-auto mb-[17px] h-[22px] flex items-center pl-[4px] bg-[#f2f2f2]">
        <span className="w-0 h-0 border-y-[5px] border-y-transparent border-r-[4px] border-r-[#333]" />
        <div className="ml-[15px] w-[236px] h-[20px] flex items-center justify-center bg-[#d0d0d0] border border-[#999]">
          <span className="w-[6px] h-[8px] border-x border-[#555] flex justify-center"><span className="w-px h-full bg-[#555]" /></span>
        </div>
        <span className="ml-[35px] w-0 h-0 border-y-[5px] border-y-transparent border-l-[4px] border-l-[#333]" />
      </div>
    </div>
  </div>
);

const StatusBar = () => (
  <div className="h-[27px] flex items-center bg-[#585858] border-t border-[#444] text-white text-[15px] shrink-0">
    <span className="ml-[8px] mb-[3px]">就绪</span>
    <svg className="ml-[19px] mb-[2px]" width="16" height="15" viewBox="0 0 16 15">
      <rect x="2" y="3" width="13" height="11" fill="#f4f4f4" />
      <circle cx="3.500" cy="3.500" r="3" fill="#ddd" />
      <path d="M5 7.500h8M5 10h8M5 12.500h8" stroke="#555" strokeDasharray="1.500 1" />
    </svg>
    <div className="ml-[1076px] w-[41px] h-full flex items-center justify-center bg-[#444]">
      <svg width="13" height="14" viewBox="0 0 13 14" fill="none" stroke="#fff"><rect x=".5" y=".5" width="12" height="13" /><path d="M.5 5h12M.5 9.500h12M6.500 1v13" /></svg>
    </div>
    <svg className="ml-[14px]" width="14" height="15" viewBox="0 0 14 15" fill="none" stroke="#fff"><rect x=".5" y=".5" width="13" height="14" /><path d="M4 4h6M4 7.500h6M4 11h6" /></svg>
    <svg className="ml-[27px]" width="13" height="15" viewBox="0 0 13 15"><rect x=".5" y=".5" width="12" height="14" fill="none" stroke="#fff" /><rect x="3" y="1" width="3" height="8" fill="#fff" /><rect x="7" y="1" width="3" height="8" fill="#fff" /></svg>
    <span className="ml-[21px] w-[9px] h-[2px] bg-white" />
    <div className="ml-[5px] w-[125px] h-[1px] bg-white flex justify-center items-center">
      <span className="w-[4px] h-[12px] bg-white" />
    </div>
    <span className="ml-[4px] relative w-[11px] h-[11px] flex items-center justify-center">
      <span className="w-[11px] h-[2px] bg-white" />
      <span className="absolute w-[2px] h-[11px] bg-white" />
    </span>
    <span className="ml-[17px] mb-[2px] text-[15.500px]">100%</span>
  </div>
);

export default function App() {
  return (
    <div className="w-[1510px] h-[865px] flex flex-col overflow-hidden bg-[#666666] font-['Noto_Sans','Noto_Sans_CJK_SC',sans-serif]">
      <TitleArea />
      <Ribbon />
      <FormulaBar />
      <div className="flex h-[587px] shrink-0">
        <div className="flex flex-col w-[1174px] shrink-0">
          <div className="flex border-b border-[#444]">
            <SheetGrid />
            <VScrollBar />
          </div>
          <SheetTabs />
        </div>
        <QueryPanel />
      </div>
      <StatusBar />
    </div>
  );
}
